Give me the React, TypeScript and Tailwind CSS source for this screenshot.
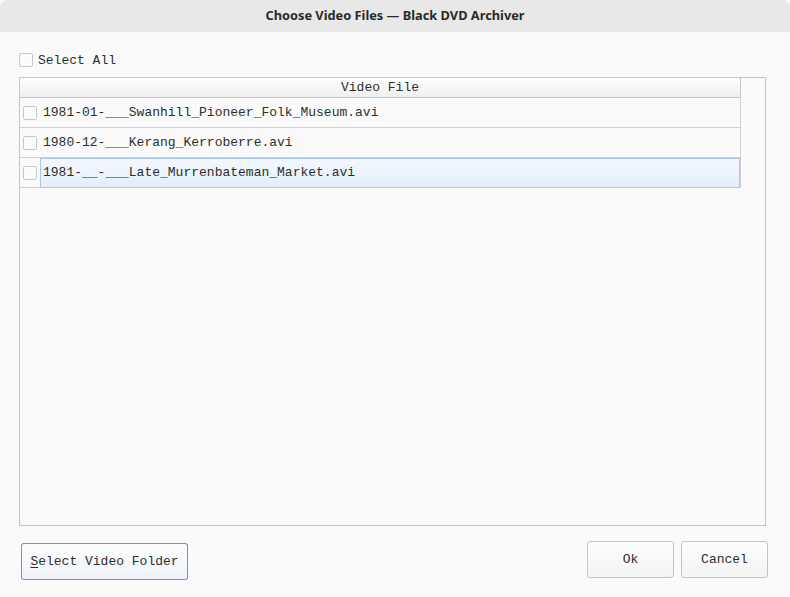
import React from "react";

const mono = { fontFamily: '"Liberation Mono", "DejaVu Sans Mono", monospace' };

function Box({ className = "" }: { className?: string }) {
  return <div className={"w-[14px] h-[14px] border border-[#c8c8c8] bg-[#fcfcfc] rounded-[2px] shrink-0 " + className} />;
}

const files = [
  "1981-01-___Swanhill_Pioneer_Folk_Museum.avi",
  "1980-12-___Kerang_Kerroberre.avi",
  "1981-__-___Late_Murrenbateman_Market.avi",
];

export default function App() {
  return (
    <div className="w-[790px] h-[597px] bg-[#fafafa] flex flex-col overflow-hidden text-[13px] text-[#2e2e2e]" style={mono}>
      <div
        className="h-[32px] shrink-0 bg-[#e8e8e8] rounded-t-[8px] flex items-center justify-center text-[12.8px] font-bold text-[#2a2a2a]"
        style={{ fontFamily: '"Noto Sans", "Open Sans", sans-serif' }}
      >
        Choose Video Files — Black DVD Archiver
      </div>
      <div className="flex-1 flex flex-col px-[19px]">
        <div className="flex items-center gap-[5px] mt-[21px] h-[14px]">
          <Box />
          <span className="leading-none pt-[1px]">Select All</span>
        </div>
        <div className="mt-[10px] h-[449px] w-[747px] border border-[#c4c4c4] bg-[#fafafa] flex flex-col">
          <div className="w-[721px] h-[20px] border-b border-r border-[#c4c4c4] bg-gradient-to-b from-white to-[#efefef] flex items-center justify-center">
            Video File
          </div>
          {files.map((f, i) => (
            <div key={f} className="w-[721px] h-[30px] border-b border-r border-[#d0d0d0] flex items-center">
              <Box className="ml-[3px]" />
              {i === 2 ? (
                <div className="ml-[3px] flex-1 h-[30px] -mb-px border border-[#a7c8ec] bg-gradient-to-b from-[#f4f8fd] to-[#e4eef9] flex items-center pl-[2px]">
                  {f}
                </div>
              ) : (
                <span className="ml-[6px]">{f}</span>
              )}
            </div>
          ))}
        </div>
        <div className="flex items-start mt-[15px]">
          <div className="mt-[2px] ml-[2px] w-[167px] h-[37px] rounded-[3px] bg-[#4a9ff5] p-px">
            <div className="w-full h-full rounded-[2px] bg-gradient-to-b from-[#fdfdfd] to-[#eef2f8] flex items-center justify-center">
              <span><span className="underline underline-offset-2">S</span>elect Video Folder</span>
            </div>
          </div>
          <div className="flex-1" />
          <div className="w-[87px] h-[37px] rounded-[3px] border border-solid border-[#c4c4c4] bg-gradient-to-b from-[#fdfdfd] to-[#f4f4f4] flex items-center justify-center">
            Ok
          </div>
          <div className="ml-[7px] mr-[3px] w-[87px] h-[37px] rounded-[3px] border border-solid border-[#c4c4c4] bg-gradient-to-b from-[#fdfdfd] to-[#f4f4f4] flex items-center justify-center">
            Cancel
          </div>
        </div>
      </div>
    </div>
  );
}
